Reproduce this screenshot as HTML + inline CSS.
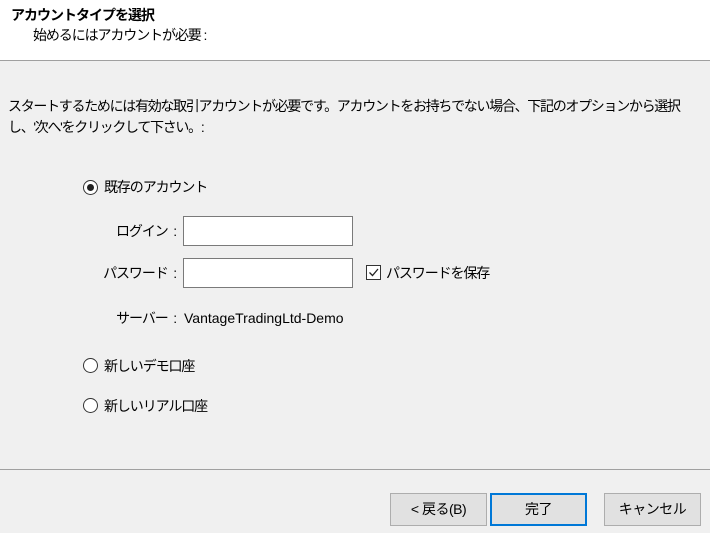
<html><head><style>
body{margin:0;width:710px;height:533px;background:#f0f0f0;font-family:"Liberation Sans","Noto Sans CJK JP",sans-serif;font-size:14px;color:#000;position:relative;overflow:hidden}
.a{position:absolute;white-space:nowrap;line-height:18px;letter-spacing:-1.1px}
.r{position:absolute;white-space:nowrap;line-height:18px;letter-spacing:-1.1px;right:534px;text-align:right}
.hdr{position:absolute;left:0;top:0;width:710px;height:60px;background:#fff;border-bottom:1px solid #a0a0a0}
.inp{position:absolute;background:#fff;border:1px solid #7a7a7a;box-sizing:border-box}
.rad{position:absolute;width:15px;height:15px;border:1px solid #333;border-radius:50%;box-sizing:border-box;background:#fff}
.btn{position:absolute;top:493px;height:33px;width:97px;background:#e1e1e1;border:1px solid #adadad;box-sizing:border-box;text-align:center;line-height:30px;letter-spacing:-0.5px}
</style></head><body>
<div class="hdr"></div>
<div class="a" style="left:11px;top:6px;font-weight:bold;letter-spacing:-1px">アカウントタイプを選択</div>
<div class="a" style="left:33px;top:26px">始めるにはアカウントが必要 :</div>
<div class="a" style="left:8px;top:97px;letter-spacing:-1.3px">スタートするためには有効な取引アカウントが必要です。アカウントをお持ちでない場合、下記のオプションから選択</div>
<div class="a" style="left:8px;top:118px;letter-spacing:-1.3px">し、'次へ'をクリックして下さい。:</div>
<div class="rad" style="left:83px;top:180px"><div style="position:absolute;left:3px;top:3px;width:7px;height:7px;border-radius:50%;background:#222"></div></div>
<div class="a" style="left:104px;top:178px">既存のアカウント</div>
<div class="r" style="top:222px">ログイン&nbsp; :</div>
<div class="inp" style="left:183px;top:216px;width:170px;height:30px"></div>
<div class="r" style="top:264px">パスワード&nbsp; :</div>
<div class="inp" style="left:183px;top:258px;width:170px;height:30px"></div>
<div style="position:absolute;left:366px;top:265px;width:15px;height:15px;border:1px solid #333;box-sizing:border-box;background:#fff"><svg width="13" height="13" style="position:absolute;left:0;top:0"><path d="M2.5 6.5 L5.5 9.5 L11 3" stroke="#222" stroke-width="1.3" fill="none"/></svg></div>
<div class="a" style="left:386px;top:264px">パスワードを保存</div>
<div class="r" style="top:309px">サーバー&nbsp; :</div>
<div class="a" style="left:184px;top:309px;letter-spacing:0">VantageTradingLtd-Demo</div>
<div class="rad" style="left:83px;top:358px"></div>
<div class="a" style="left:104px;top:357px">新しいデモ口座</div>
<div class="rad" style="left:83px;top:398px"></div>
<div class="a" style="left:104px;top:397px">新しいリアル口座</div>
<div style="position:absolute;left:0;top:469px;width:710px;height:1px;background:#a0a0a0"></div>
<div class="btn" style="left:390px">&lt; 戻る(B)</div>
<div class="btn" style="left:490px;border:2px solid #0078d7;line-height:29px">完了</div>
<div class="btn" style="left:604px">キャンセル</div>
</body></html>
